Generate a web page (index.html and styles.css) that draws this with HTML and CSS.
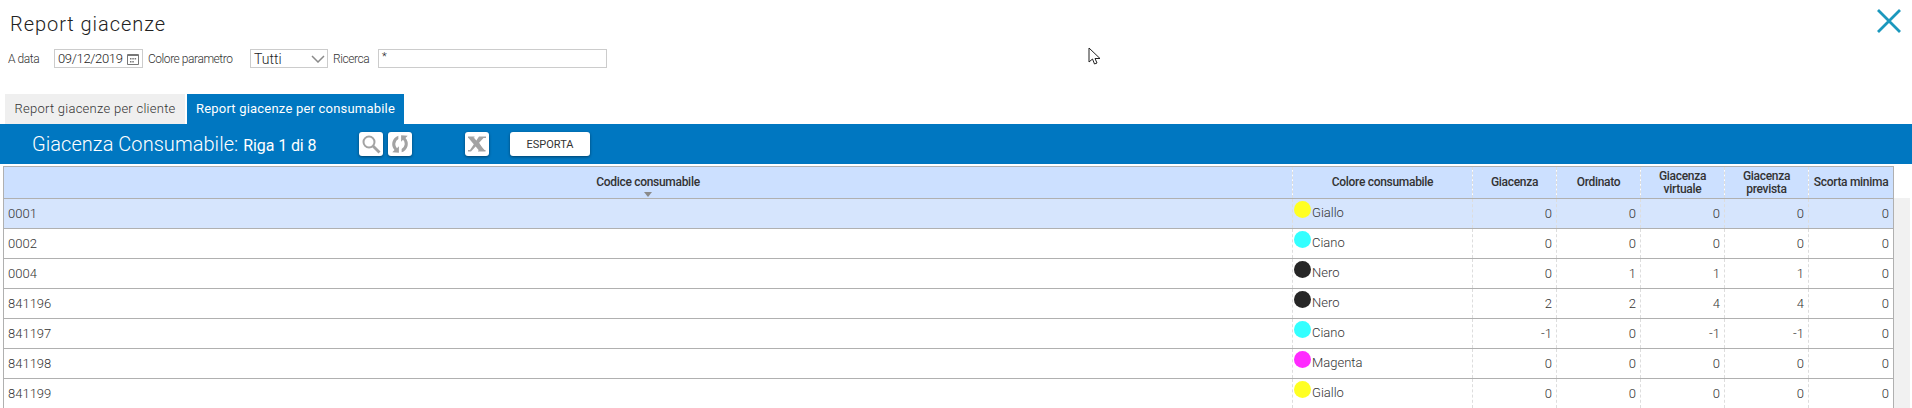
FILE: index.html
```html
<!DOCTYPE html>
<html lang="it">
<head>
<meta charset="utf-8">
<title>Report giacenze</title>
<link rel="stylesheet" href="styles.css">
</head>
<body>
<header class="top">
  <h1 class="page-title">Report giacenze</h1>
  <svg class="close" viewBox="0 0 24 24" width="24" height="24"><path d="M1 1 23 23M23 1 1 23" fill="none" stroke="#1b98bd" stroke-width="2.800"/></svg>
</header>
<form class="filters">
  <label class="lab lab-data">A data</label>
  <div class="field field-date"><span>09/12/2019</span>
    <svg viewBox="0 0 12 12" width="12" height="12"><path d="M.5 1.500h11v10H.5z" fill="none" stroke="#777"/><path d="M1 1h10v2H1z" fill="#777"/><path d="M3 5h1.500v1.500H3zM5.300 5h1.500v1.500H5.300zM7.600 5h1.500v1.500H7.600zM3 8h1.500v1.500H3zM5.300 8h1.500v1.500H5.300z" fill="#777"/></svg>
  </div>
  <label class="lab lab-colore">Colore parametro</label>
  <div class="field field-select"><span>Tutti</span>
    <svg viewBox="0 0 14 8" width="14" height="8"><path d="M1 1 7 7 13 1" fill="none" stroke="#8a8a8a" stroke-width="1.500"/></svg>
  </div>
  <label class="lab lab-ricerca">Ricerca</label>
  <div class="field field-search">*</div>
</form>
<nav class="tabs">
  <div class="tab">Report giacenze per cliente</div>
  <div class="tab tab-active">Report giacenze per consumabile</div>
</nav>
<section class="toolbar">
  <div class="toolbar-title">Giacenza Consumabile: <span class="count">Riga 1 di 8</span></div>
  <div class="btn btn-icon btn-search"><svg viewBox="0 0 20 20" width="20" height="20"><circle cx="8" cy="8" r="5.500" fill="none" stroke="#a3a3a3" stroke-width="2"/><path d="M12 12l6.500 6.500" stroke="#a3a3a3" stroke-width="2.800"/></svg></div>
  <div class="btn btn-icon btn-refresh"><svg viewBox="0 0 20 20" width="22" height="22"><path d="M8.500 2.500A8 8 0 0 0 5 15.500L3 17.500l6 .5V12l-1.800 1.800A5.300 5.300 0 0 1 8.500 5.500Z" fill="#a3a3a3"/><path d="M11.500 17.500A8 8 0 0 0 15 4.500l2-2-6-.5v6l1.800-1.800A5.300 5.300 0 0 1 11.500 14.500Z" fill="#a3a3a3"/></svg></div>
  <div class="btn btn-icon btn-excel"><svg viewBox="0 0 20 20" width="20" height="20"><path d="M1 2.500h6.500v1H6.500L17.500 16h1v1.500H11v-1h1L1.500 4H1z" fill="#a3a3a3"/><path d="M3 4.500 9 11l2-2-4-5z" fill="#a3a3a3"/><path d="M12 2.500h7V4h-2.500L4 17.500H1V16h2z" fill="#a3a3a3"/><path d="M12 8.500 9 11l6 6h2z" fill="#a3a3a3"/></svg></div>
  <div class="btn btn-export">ESPORTA</div>
</section>
<main class="grid-wrap">
  <table class="grid">
    <colgroup>
      <col class="c-code"><col class="c-color"><col class="c-g"><col class="c-g"><col class="c-g"><col class="c-g"><col class="c-s">
    </colgroup>
    <thead>
      <tr>
        <th><span class="sort-label">Codice consumabile</span><span class="sort-arrow"></span></th>
        <th>Colore consumabile</th>
        <th>Giacenza</th>
        <th>Ordinato</th>
        <th>Giacenza<br>virtuale</th>
        <th>Giacenza<br>prevista</th>
        <th>Scorta minima</th>
      </tr>
    </thead>
    <tbody>
      <tr class="selected"><td>0001</td><td class="col"><span class="dot yellow"></span>Giallo</td><td>0</td><td>0</td><td>0</td><td>0</td><td>0</td></tr>
      <tr><td>0002</td><td class="col"><span class="dot cyan"></span>Ciano</td><td>0</td><td>0</td><td>0</td><td>0</td><td>0</td></tr>
      <tr><td>0004</td><td class="col"><span class="dot black"></span>Nero</td><td>0</td><td>1</td><td>1</td><td>1</td><td>0</td></tr>
      <tr><td>841196</td><td class="col"><span class="dot black"></span>Nero</td><td>2</td><td>2</td><td>4</td><td>4</td><td>0</td></tr>
      <tr><td>841197</td><td class="col"><span class="dot cyan"></span>Ciano</td><td>-1</td><td>0</td><td>-1</td><td>-1</td><td>0</td></tr>
      <tr><td>841198</td><td class="col"><span class="dot magenta"></span>Magenta</td><td>0</td><td>0</td><td>0</td><td>0</td><td>0</td></tr>
      <tr><td>841199</td><td class="col"><span class="dot yellow"></span>Giallo</td><td>0</td><td>0</td><td>0</td><td>0</td><td>0</td></tr>
    </tbody>
  </table>
  <div class="scroll-track"></div>
</main>
<svg class="cursor" viewBox="0 0 14 20" width="14" height="20"><path d="M1 1V15L4.500 12 6.500 17 9 16 7 11.500H12Z" fill="#fff" stroke="#222" stroke-width="1"/></svg>
</body>
</html>
```
FILE: styles.css
```css
* { box-sizing: border-box; }
html, body { margin: 0; padding: 0; }
body {
  width: 1912px;
  height: 408px;
  overflow: hidden;
  position: relative;
  background: #fff;
  font-family: Roboto, "Liberation Sans", sans-serif;
  color: #333;
}
.top {
  display: flex;
  justify-content: space-between;
  align-items: flex-start;
  height: 49px;
  padding: 9px 11px 0 10px;
}
.page-title {
  margin: 0;
  font-size: 20px;
  line-height: 30px;
  font-weight: 300;
  color: #222;
  letter-spacing: .95px;
}
.filters {
  display: flex;
  align-items: center;
  height: 19px;
  padding-left: 8px;
  font-size: 12px;
}
.lab { color: #333; font-size: 12px; font-weight: 300; letter-spacing: -.45px; white-space: nowrap; }
.lab-data { width: 46px; }
.lab-colore { width: 102px; margin-left: 5px; }
.lab-ricerca { width: 45px; margin-left: 5px; }
.field {
  height: 19px;
  border: 1px solid #ccc;
  display: flex;
  align-items: center;
  justify-content: space-between;
  padding: 0 3px;
  color: #222;
  font-size: 13px;
  font-weight: 300;
  background: #fff;
}
.field-date { width: 89px; padding-right: 3px; letter-spacing: -.35px; }
.field-select { width: 78px; padding-right: 2px; font-size: 14px; }
.field-search { width: 229px; align-items: flex-start; font-size: 11px; }
.tabs {
  display: flex;
  gap: 2px;
  height: 30px;
  margin-top: 26px;
  padding-left: 5px;
}
.tab {
  width: 180px;
  background: #efefef;
  color: #333;
  font-size: 13px;
  font-weight: 300;
  letter-spacing: .26px;
  line-height: 30px;
  text-align: center;
  white-space: nowrap;
}
.tab-active {
  width: 217px;
  background: #0077c1;
  color: #fff;
  font-weight: 400;
  letter-spacing: .2px;
}
.toolbar {
  display: flex;
  align-items: center;
  height: 40px;
  padding-left: 32px;
  background: #0077c1;
}
.toolbar-title {
  width: 327px;
  color: #fff;
  font-size: 20px;
  font-weight: 300;
  letter-spacing: .05px;
  white-space: nowrap;
}
.count { font-size: 16px; font-weight: 400; letter-spacing: -.1px; }
.btn {
  display: flex;
  align-items: center;
  justify-content: center;
  height: 24px;
  background: #fff;
  border-radius: 3px;
  box-shadow: 0 1px 3px rgba(0, 0, 0, .45);
}
.btn-icon { width: 24px; }
.btn-refresh { margin-left: 5px; }
.btn-excel { margin-left: 53px; }
.btn-export {
  width: 80px;
  margin-left: 21px;
  font-size: 11px;
  color: #333;
}
.grid-wrap {
  display: flex;
  padding: 2px 2px 0 3px;
  height: 244px;
}
.grid {
  width: 1889px;
  flex: none;
  table-layout: fixed;
  border-collapse: collapse;
  font-size: 13px;
  font-weight: 300;
  color: #333;
  align-self: flex-start;
}
.c-code { width: 1289px; }
.c-color { width: 180px; }
.c-g { width: 84px; }
.c-s { width: 85px; }
.grid th {
  height: 32px;
  padding: 0;
  background: #cce0ff;
  border: 1px solid #b0b0b0;
  border-left: 1px dashed #ddd;
  border-right: 1px dashed #ddd;
  font-size: 12px;
  font-weight: 500;
  letter-spacing: -.3px;
  line-height: 13px;
  color: #333;
  text-align: center;
  position: relative;
}
.grid td {
  height: 30px;
  padding: 0 4px;
  border-bottom: 1px solid #b0b0b0;
  border-left: 1px dashed #ddd;
  border-right: 1px dashed #ddd;
  text-align: right;
}
.grid th:first-child, .grid td:first-child { border-left: 1px solid #b0b0b0; text-align: center; }
.grid td:first-child { text-align: left; padding-left: 4px; }
.grid th:last-child, .grid td:last-child { border-right: 1px solid #b0b0b0; }
.grid td.col { text-align: left; padding: 0 0 0 1px; white-space: nowrap; }
.selected td { background: #d6e5fd; }
.sort-label { display: block; }
.sort-arrow {
  position: absolute;
  left: 50%;
  bottom: 1px;
  width: 0;
  height: 0;
  margin-left: -4px;
  border: 4px solid transparent;
  border-bottom: 0;
  border-top: 5px solid #8a8a8a;
}
.dot {
  display: inline-block;
  width: 17px;
  height: 17px;
  border-radius: 50%;
  margin-right: 1px;
  position: relative;
  top: -4px;
  vertical-align: middle;
}
.yellow { background: #ffff22; }
.cyan { background: #33ffff; }
.black { background: #262626; }
.magenta { background: #ff2bff; }
.scroll-track {
  width: 18px;
  margin-top: 32px;
  background: #f1f1f1;
  height: 210px;
}
.cursor { position: absolute; left: 1088px; top: 47px; }
```
